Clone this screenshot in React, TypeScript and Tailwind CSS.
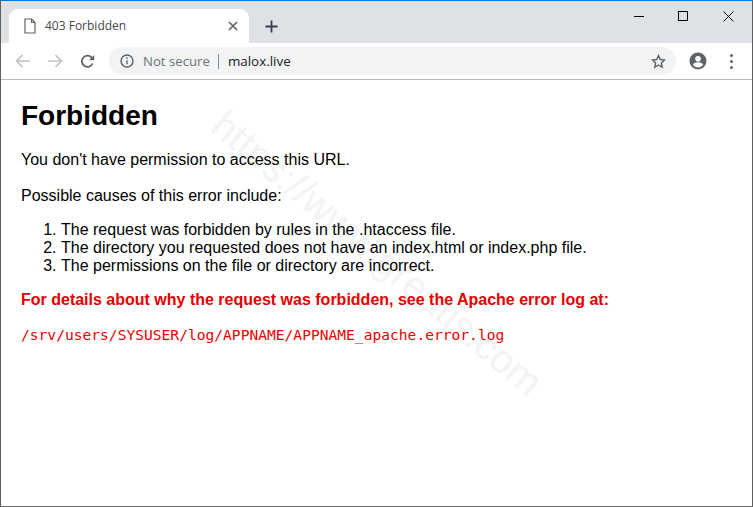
export default function App() {
  return (
    <div className="relative flex h-[507px] w-[753px] flex-col overflow-hidden border-x border-b border-x-[#5f5f5f] border-b-[#6b6b6b] bg-white font-['Liberation_Sans',Arial,sans-serif]">
      {/* darker part of the window edge */}
      <div className="absolute left-[-1px] top-0 h-[432px] w-px bg-[#202124]" />

      {/* watermark, sits behind the page text */}
      <div className="pointer-events-none absolute left-[151px] top-[234px] w-[450px] rotate-[40deg] whitespace-nowrap text-center font-['Liberation_Sans',sans-serif] text-[39.5px] leading-none text-[#f3f3f3]">
        https://www.greatis.com
      </div>

      {/* tab strip */}
      <div className="relative flex h-[43px] shrink-0 items-end border-t border-t-[#0078d7] bg-[#dee1e6] pl-2">
        <div className="flex h-[34px] w-[240px] items-center rounded-t-[9px] bg-white pl-[15px] pr-[11px]">
          <svg width="12" height="16" viewBox="0 0 12 16" fill="none" stroke="#5f6368" strokeWidth="1.2">
            <path d="M1 1h6.5L11 4.5V15H1z" />
            <path d="M7.5 1v3.5H11" />
          </svg>
          <span className="ml-[9px] flex-1 font-['Open_Sans',sans-serif] text-xs leading-none text-[#45474a]">403 Forbidden</span>
          <svg width="10" height="10" viewBox="0 0 10 10" stroke="#5f6368" strokeWidth="1.7">
            <path d="M1 1l8 8M9 1l-8 8" />
          </svg>
        </div>
        <div className="flex h-[34px] items-center pl-4">
          <svg width="13" height="13" viewBox="0 0 13 13" stroke="#3c3c50" strokeWidth="1.8">
            <path d="M6.5 0.5v12M0.5 6.5h12" />
          </svg>
        </div>
        <div className="ml-auto flex h-[41px] items-start self-start pt-[9px]">
          <div className="flex h-[12px] w-[45px] items-center justify-center">
            <div className="h-px w-[10px] bg-black" />
          </div>
          <div className="flex h-[12px] w-[45px] items-center justify-center pr-[2px]">
            <div className="h-[10px] w-[10px] border border-black" />
          </div>
          <div className="flex h-[12px] w-[46px] items-center justify-center pr-[1px]">
            <svg width="11" height="11" viewBox="0 0 11 11" stroke="#000" strokeWidth="1">
              <path d="M0.5 0.5l10 10M10.5 0.5l-10 10" />
            </svg>
          </div>
        </div>
      </div>

      {/* toolbar */}
      <div className="relative flex h-[37px] shrink-0 items-center border-b border-b-[#b8babc] bg-white pl-[14px] pr-[19px]">
        <svg width="16" height="14" viewBox="0 0 16 14" fill="none" stroke="#bdc1c6" strokeWidth="1.7">
          <path d="M15 7H2M7.5 1L1.5 7l6 6" />
        </svg>
        <svg className="ml-[16px]" width="16" height="14" viewBox="0 0 16 14" fill="none" stroke="#bdc1c6" strokeWidth="1.7">
          <path d="M1 7h13M8.5 1l6 6-6 6" />
        </svg>
        <svg className="ml-[17px]" width="15" height="15" viewBox="0 0 15 15" fill="none" stroke="#5f6368" strokeWidth="1.8">
          <path d="M12.6 9.5A5.6 5.6 0 1 1 11.5 3.4L13.5 5.4" />
          <path d="M14.2 1v5.2H9z" fill="#5f6368" stroke="none" />
        </svg>
        <div className="ml-[14px] flex h-[28px] flex-1 items-center rounded-full bg-[#f1f3f4] pl-[11px] pr-[10px]">
          <svg width="14" height="14" viewBox="0 0 14 14" fill="none" stroke="#5f6368" strokeWidth="1.4">
            <circle cx="7" cy="7" r="6" />
            <path d="M7 6.2v4M7 3.6v1.5" />
          </svg>
          <span className="ml-[9px] pt-px font-['Open_Sans',sans-serif] text-[13.2px] leading-none text-[#6f7276]">Not secure</span>
          <div className="ml-2 h-[15px] w-px bg-[#8a8d91]" />
          <span className="ml-[9px] pt-px font-['Open_Sans',sans-serif] text-[13.4px] leading-none text-[#202124]">malox.live</span>
          <svg className="ml-auto" width="15" height="15" viewBox="0 0 15 15" fill="none" stroke="#5f6368" strokeWidth="1.4">
            <path d="M7.5 1.6l1.8 3.9 4.2.5-3.1 2.9.8 4.2-3.7-2.1-3.7 2.1.8-4.2L1.5 6l4.2-.5z" />
          </svg>
        </div>
        <svg className="ml-[13px]" width="18" height="18" viewBox="0 0 18 18">
          <circle cx="9" cy="9" r="8.5" fill="#5f6368" />
          <circle cx="9" cy="6.7" r="2.8" fill="#fff" />
          <path d="M3.8 12.8c1.2-1.8 3.3-2.5 5.2-2.5s4 .7 5.2 2.5c-1.2 1.6-3.1 2.6-5.2 2.6s-4-1-5.2-2.6z" fill="#fff" />
        </svg>
        <div className="ml-[23px] flex flex-col gap-[3px]">
          <div className="h-[3px] w-[3px] rounded-full bg-[#5f6368]" />
          <div className="h-[3px] w-[3px] rounded-full bg-[#5f6368]" />
          <div className="h-[3px] w-[3px] rounded-full bg-[#5f6368]" />
        </div>
      </div>

      {/* page */}
      <div className="relative flex-1 pl-5 pt-[20px] text-base leading-[18px] text-black">
        <h1 className="text-[28px] font-bold leading-[32px]">Forbidden</h1>
        <p className="mt-[19px]">You don't have permission to access this URL.</p>
        <p className="mt-[18px]">Possible causes of this error include:</p>
        <ol className="mt-[16px] list-decimal pl-10">
          <li>The request was forbidden by rules in the .htaccess file.</li>
          <li>The directory you requested does not have an index.html or index.php file.</li>
          <li>The permissions on the file or directory are incorrect.</li>
        </ol>
        <p className="mt-[16px] font-bold text-[#e60000]">For details about why the request was forbidden, see the Apache error log at:</p>
        <p className="mt-[17px] font-['DejaVu_Sans_Mono',monospace] text-[14.6px] text-[#ee0000]">/srv/users/SYSUSER/log/APPNAME/APPNAME_apache.error.log</p>
      </div>
    </div>
  );
}
